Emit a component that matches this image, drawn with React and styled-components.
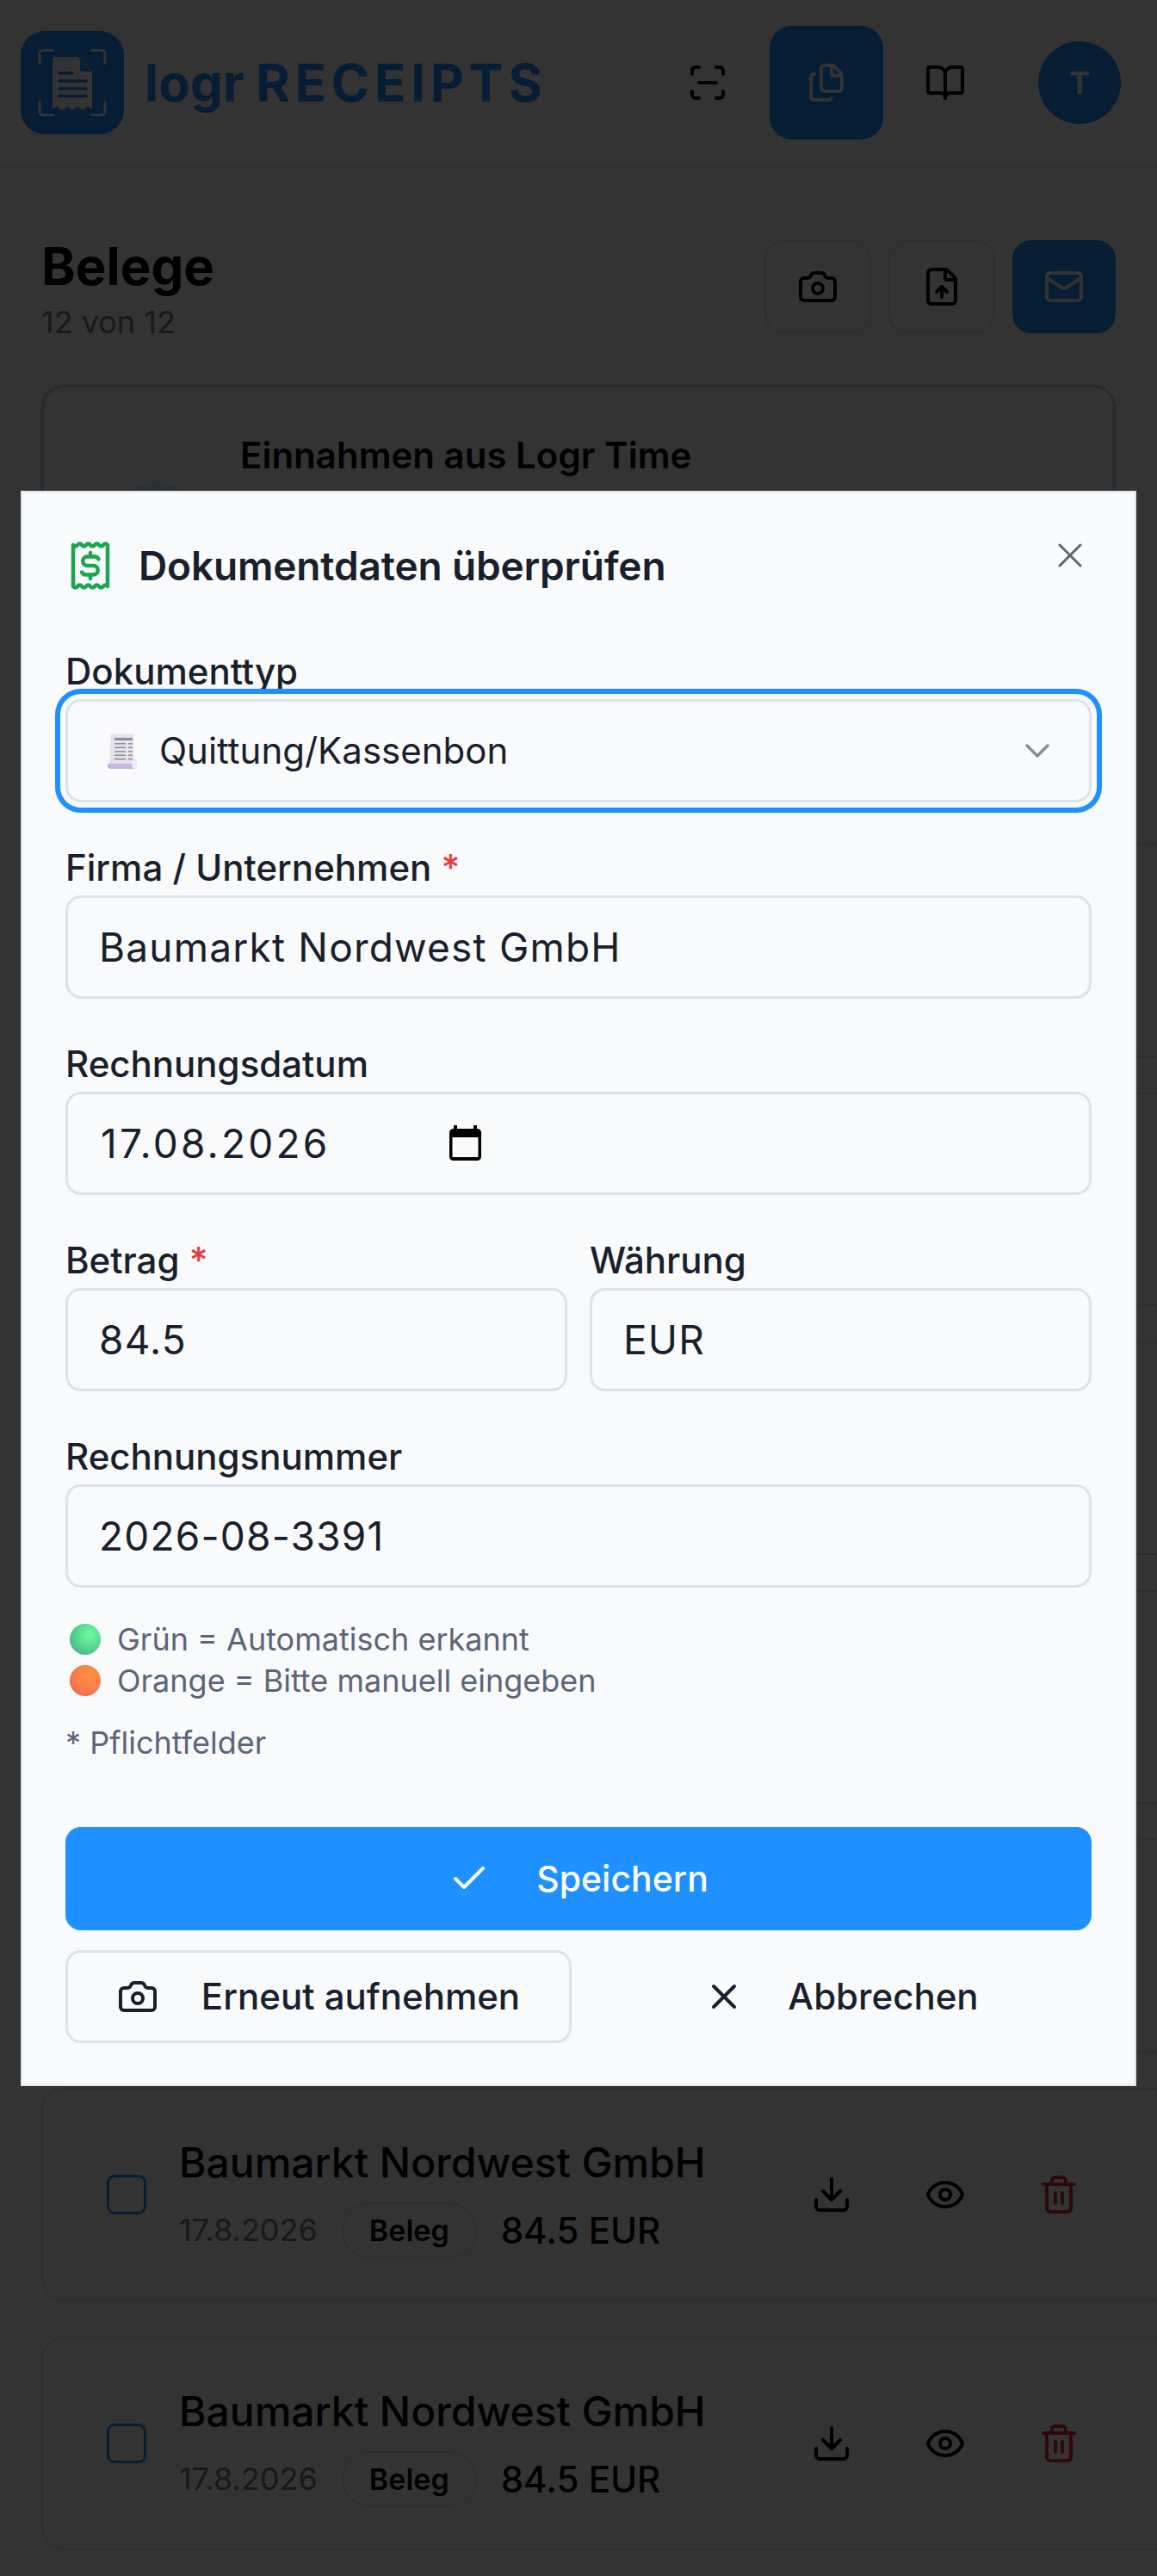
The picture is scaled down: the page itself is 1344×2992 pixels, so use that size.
import styled, { createGlobalStyle } from "styled-components";
import { BookOpen, Camera, Check, ChevronDown, Download, Eye, FileUp, Files, Mail, ScanLine, Trash2, X } from "lucide-react";

const Global = createGlobalStyle`
    html, body { margin: 0; padding: 0; background: #fff; }
    body { font-family: Inter, "Noto Sans", sans-serif; color: #1a1f2c; overflow: hidden; }
    * { box-sizing: border-box; }
`;

const Page = styled.div`
    position: relative;
    width: 1344px;
    height: 2992px;
    overflow: hidden;
    background: #fff;
`;
const Header = styled.header`
    height: 194px;
    padding: 0 42px 0 24px;
    display: flex;
    align-items: center;
    gap: 6px;
    border-bottom: 2px solid #e5e9ee;
    background: #fcfcfc;
`;
const Brand = styled.div`
    display: flex;
    align-items: center;
    gap: 24px;
    margin-right: auto;
    color: #1e90ff;
    font-weight: 700;
    font-size: 60px;
`;
const BrandName = styled.div`
    display: flex;
    gap: 14px;
`;
const BrandSub = styled.span`
    letter-spacing: 5.8px;
    font-weight: 700;
`;
const NavButton = styled.div`
    width: 132px;
    height: 132px;
    border-radius: 26px;
    display: flex;
    align-items: center;
    justify-content: center;
    color: ${(p) => (p.$active ? "#fff" : "#000")};
    background: ${(p) => (p.$active ? "#1e90ff" : "transparent")};
`;
const Avatar = styled.div`
    width: 96px;
    height: 96px;
    margin-left: 36px;
    border-radius: 50%;
    background: #1e90ff;
    color: #fff;
    font-size: 36px;
    font-weight: 700;
    display: flex;
    align-items: center;
    justify-content: center;
`;
const Content = styled.main`
    padding: 84px 48px 0;
`;
const TitleRow = styled.div`
    display: flex;
    justify-content: space-between;
    align-items: flex-start;
    margin-bottom: 61px;
    height: 108px;
`;
const PageTitle = styled.h1`
    margin: -4px 0 0;
    font-size: 60px;
    line-height: 70px;
    font-weight: 700;
    color: #000;
`;
const PageSub = styled.div`
    margin-top: 7px;
    font-size: 36px;
    line-height: 46px;
    color: #767c88;
`;
const ToolBar = styled.div`
    display: flex;
    gap: 20px;
    margin-top: 1px;
`;
const ToolButton = styled.div`
    width: ${(p) => (p.$primary ? "120px" : "124px")};
    height: 108px;
    border-radius: 22px;
    border: ${(p) => (p.$primary ? "none" : "2px solid #e5e7eb")};
    background: ${(p) => (p.$primary ? "#1e90ff" : "transparent")};
    color: ${(p) => (p.$primary ? "#fff" : "#000")};
    display: flex;
    align-items: center;
    justify-content: center;
`;
const IncomeCard = styled.section`
    height: 492px;
    margin-bottom: 41px;
    padding: 55px 0 0 71px;
    display: flex;
    gap: 37px;
    border: 3px solid rgba(30, 144, 255, 0.35);
    border-radius: 26px;
`;
const IncomeBadge = styled.div`
    width: 120px;
    height: 120px;
    margin-top: 56px;
    border-radius: 50%;
    background: #dcebfb;
`;
const IncomeTitle = styled.div`
    font-size: 42px;
    line-height: 48px;
    font-weight: 600;
    color: #000;
`;
const DocCard = styled.article`
    width: 1330px;
    height: 248px;
    margin-bottom: 41px;
    padding: 0 0 0 74px;
    display: flex;
    align-items: center;
    border: 2px solid #e5e7eb;
    border-radius: 26px;
`;
const CheckBox = styled.div`
    width: 46px;
    height: 46px;
    margin-right: 38px;
    border-radius: 9px;
    border: 3px solid #1e90ff;
`;
const DocInfo = styled.div`
    width: 692px;
    padding-top: 8px;
`;
const DocName = styled.div`
    font-size: 48px;
    line-height: 56px;
    font-weight: 500;
    color: #000;
    margin-bottom: 18px;
`;
const DocMeta = styled.div`
    display: flex;
    align-items: center;
    gap: 28px;
`;
const DocDate = styled.span`
    font-size: 36px;
    color: #767c88;
`;
const DocBadge = styled.span`
    height: 65px;
    padding: 0 30px;
    border-radius: 33px;
    border: 2px solid #e5e7eb;
    display: flex;
    align-items: center;
    font-size: 34px;
    font-weight: 600;
    color: #000;
`;
const DocAmount = styled.span`
    font-size: 42px;
    font-weight: 500;
    color: #000;
`;
const DocAction = styled.div`
    width: 132px;
    display: flex;
    justify-content: center;
    color: ${(p) => (p.$danger ? "#e03131" : "#000")};
`;

const Overlay = styled.div`
    position: absolute;
    inset: 0;
    padding: 0 24px;
    display: flex;
    align-items: center;
    background: rgba(0, 0, 0, 0.8);
`;
const Modal = styled.div`
    position: relative;
    width: 1296px;
    height: 1853px;
    padding: 54px 50px 50px;
    background: #f9fafc;
    border: 2px solid #dee4ec;
`;
const ModalHeader = styled.div`
    display: flex;
    align-items: center;
    gap: 33px;
    height: 62px;
    padding-left: 6px;
    margin-bottom: 68px;
`;
const ModalTitle = styled.h2`
    margin: 0;
    font-size: 46px;
    font-weight: 600;
    letter-spacing: -0.15px;
    color: #1a1f2c;
`;
const CloseButton = styled.div`
    position: absolute;
    top: 49px;
    right: 51px;
    color: #5f6570;
    display: flex;
`;
const Field = styled.div`
    flex: 1;
    margin-bottom: 52px;
`;
const Label = styled.div`
    height: 48px;
    margin-bottom: 8px;
    font-size: 42px;
    line-height: 48px;
    font-weight: 500;
    color: #1a1f2c;
`;
const Required = styled.span`
    color: #e53e3e;
`;
const Input = styled.div`
    position: relative;
    height: 120px;
    padding: 0 36px;
    display: flex;
    align-items: center;
    border: 3px solid #dde3ea;
    border-radius: 18px;
    background: #f9fafc;
    font-size: 46px;
    letter-spacing: 1.2px;
    color: #1a1f2c;
`;
const SelectBox = styled(Input)`
    outline: 6px solid #1e90ff;
    outline-offset: 6px;
    padding: 0 46px;
    font-size: 42px;
    letter-spacing: 0;
    gap: 26px;
`;
const SelectChevron = styled.div`
    margin-left: auto;
    margin-right: -10px;
    color: #8a8d93;
    display: flex;
`;
const DateText = styled.span`
    letter-spacing: 3.2px;
    margin-left: 2px;
    margin-right: 139px;
`;
const Pair = styled.div`
    display: flex;
    gap: 26px;
`;
const Legend = styled.div`
    margin-top: -16px;
    font-size: 36px;
    line-height: 48px;
    color: #5c6578;
`;
const LegendRow = styled.div`
    display: flex;
    align-items: center;
    gap: 19px;
    padding-left: 5px;
`;
const Dot = styled.span`
    width: 36px;
    height: 36px;
    border-radius: 50%;
    background: ${(p) =>
        p.$tone === "green"
            ? "radial-gradient(circle at 65% 35%, #6dfca0 0%, #55cf8c 55%, #3f9e93 100%)"
            : "radial-gradient(circle at 65% 35%, #ff923f 0%, #f77c4d 55%, #ee4f60 100%)"};
`;
const Hint = styled.div`
    margin-top: 24px;
    font-size: 36px;
    line-height: 48px;
    color: #5c6578;
`;
const SaveButton = styled.div`
    height: 120px;
    margin-top: 74px;
    margin-bottom: 23px;
    border-radius: 18px;
    background: #1e90ff;
    color: #fff;
    font-size: 41px;
    font-weight: 500;
    display: flex;
    align-items: center;
    justify-content: center;
    gap: 54px;
`;
const ButtonRow = styled.div`
    display: flex;
    gap: 22px;
`;
const SecondaryButton = styled.div`
    flex: 1;
    height: 108px;
    border-radius: 18px;
    border: ${(p) => (p.$plain ? "none" : "3px solid #dde3ea")};
    font-size: 42px;
    font-weight: 500;
    color: #1a1f2c;
    display: flex;
    align-items: center;
    justify-content: center;
    gap: 50px;
`;

function LogoMark() {
    return (
        <svg width="120" height="120" viewBox="0 0 120 120">
            <rect width="120" height="120" rx="28" fill="#1e90ff" />
            <g fill="none" stroke="#fff" strokeWidth="3" strokeLinecap="round">
                <path d="M37 22.5h-11a4 4 0 0 0 -4 4v11" />
                <path d="M83 22.5h11a4 4 0 0 1 4 4v11" />
                <path d="M37 97.500h-11a4 4 0 0 1 -4 -4v-11" />
                <path d="M83 97.500h11a4 4 0 0 0 4 -4v-11" />
            </g>
            <path d="M39 30h27l17 17v44l-5 -3.500l-6 4.500l-6 -4.500l-6 4.500l-6 -4.500l-6 4.500l-6 -4.500l-5 3.500v-59a2 2 0 0 1 2 -2z" fill="#fff" />
            <path d="M69 33.500l13 13.500h-11a2 2 0 0 1 -2 -2z" fill="#1e90ff" />
            <g stroke="#1e90ff" strokeWidth="3.500" strokeLinecap="round">
                <path d="M45 49h15" />
                <path d="M45 58h31" />
                <path d="M45 67h31" />
                <path d="M45 75.500h31" />
            </g>
        </svg>
    );
}

function ReceiptDollar() {
    return (
        <svg width="46" height="56" viewBox="0 0 46 56" fill="none" stroke="#1aa64f" strokeWidth="4.500">
            <path d="M3 4q2.500 3 5 0t5 0t5 0t5 0t5 0t5 0t5 0t5 0v48q-2.500 -3 -5 0t-5 0t-5 0t-5 0t-5 0t-5 0t-5 0t-5 0z" strokeLinejoin="round" />
            <path
                d="M32.500 20.500a5 5 0 0 0 -4.500 -3h-8.500a5.250 5.250 0 0 0 0 10.500h7a5.250 5.250 0 0 1 0 10.500h-9a5 5 0 0 1 -4.500 -3M23 13v4.500M23 38.500v4.500"
                strokeLinecap="round"
            />
        </svg>
    );
}

function ReceiptEmoji() {
    return (
        <svg width="34" height="42" viewBox="0 0 34 42">
            <path d="M4 1l2 1.500l2 -1.500l2 1.500l2 -1.500l2 1.500l2 -1.500l2 1.500l2 -1.500l2 1.500l2 -1.500l2 1.500l2 -1.500l2 1.500v36l-28 0z" fill="#e6e2ec" />
            <path d="M0 36h28v2a4 4 0 0 0 6 0a4 4 0 0 1 -4 4h-26a4 4 0 0 1 -4 -6z" fill="#c9b6dc" />
            <rect x="29" y="30" width="5" height="12" rx="2.500" fill="#efeaf3" />
            <g fill="#8f8d96">
                <rect x="8" y="6" width="21" height="3" />
                <rect x="8" y="12" width="13" height="1.500" />
                <rect x="24" y="12" width="5" height="1.500" />
                <rect x="8" y="16.500" width="13" height="1.500" />
                <rect x="24" y="16.500" width="5" height="1.500" />
                <rect x="8" y="21" width="13" height="1.500" />
                <rect x="24" y="21" width="5" height="1.500" />
                <rect x="8" y="25.500" width="13" height="1.500" />
                <rect x="24" y="25.500" width="5" height="1.500" />
                <rect x="8" y="30" width="13" height="1.500" />
                <rect x="24" y="30" width="5" height="1.500" />
            </g>
        </svg>
    );
}

function CalendarGlyph() {
    return (
        <svg width="37" height="41" viewBox="0 0 37 41">
            <path d="M4.500 4h28a4.500 4.500 0 0 1 4.500 4.500v28a4.500 4.500 0 0 1 -4.500 4.500h-28a4.500 4.500 0 0 1 -4.500 -4.500v-28a4.500 4.500 0 0 1 4.500 -4.500z" fill="#000" />
            <rect x="3.500" y="14" width="30" height="23" fill="#f9fafc" />
            <rect x="5" y="0" width="4" height="6" fill="#000" />
            <rect x="28" y="0" width="4" height="6" fill="#000" />
        </svg>
    );
}

const docs = [0, 1, 2, 3, 4, 5, 6];

export default function App() {
    return (
        <Page>
            <Global />
            <Header>
                <Brand>
                    <LogoMark />
                    <BrandName>
                        logr <BrandSub>RECEIPTS</BrandSub>
                    </BrandName>
                </Brand>
                <NavButton><ScanLine size={48} /></NavButton>
                <NavButton $active><Files size={48} /></NavButton>
                <NavButton><BookOpen size={48} /></NavButton>
                <Avatar>T</Avatar>
            </Header>
            <Content>
                <TitleRow>
                    <div>
                        <PageTitle>Belege</PageTitle>
                        <PageSub>12 von 12</PageSub>
                    </div>
                    <ToolBar>
                        <ToolButton><Camera size={48} /></ToolButton>
                        <ToolButton><FileUp size={48} /></ToolButton>
                        <ToolButton $primary><Mail size={48} /></ToolButton>
                    </ToolBar>
                </TitleRow>
                <IncomeCard>
                    <IncomeBadge />
                    <IncomeTitle>Einnahmen aus Logr Time</IncomeTitle>
                </IncomeCard>
                {docs.map((d) => (
                    <DocCard key={d}>
                        <CheckBox />
                        <DocInfo>
                            <DocName>Baumarkt Nordwest GmbH</DocName>
                            <DocMeta>
                                <DocDate>17.8.2026</DocDate>
                                <DocBadge>Beleg</DocBadge>
                                <DocAmount>84.5 EUR</DocAmount>
                            </DocMeta>
                        </DocInfo>
                        <DocAction><Download size={48} /></DocAction>
                        <DocAction><Eye size={48} /></DocAction>
                        <DocAction $danger><Trash2 size={48} /></DocAction>
                    </DocCard>
                ))}
            </Content>
            <Overlay>
                <Modal>
                    <ModalHeader>
                        <ReceiptDollar />
                        <ModalTitle>Dokumentdaten überprüfen</ModalTitle>
                    </ModalHeader>
                    <CloseButton><X size={48} strokeWidth={1.5} /></CloseButton>
                    <Field>
                        <Label>Dokumenttyp</Label>
                        <SelectBox>
                            <ReceiptEmoji />
                            Quittung/Kassenbon
                            <SelectChevron><ChevronDown size={48} strokeWidth={1.75} /></SelectChevron>
                        </SelectBox>
                    </Field>
                    <Field>
                        <Label>Firma / Unternehmen <Required>*</Required></Label>
                        <Input>Baumarkt Nordwest GmbH</Input>
                    </Field>
                    <Field>
                        <Label>Rechnungsdatum</Label>
                        <Input><DateText>17.08.2026</DateText><CalendarGlyph /></Input>
                    </Field>
                    <Pair>
                        <Field>
                            <Label>Betrag <Required>*</Required></Label>
                            <Input>84.5</Input>
                        </Field>
                        <Field>
                            <Label>Währung</Label>
                            <Input>EUR</Input>
                        </Field>
                    </Pair>
                    <Field>
                        <Label>Rechnungsnummer</Label>
                        <Input>2026-08-3391</Input>
                    </Field>
                    <Legend>
                        <LegendRow><Dot $tone="green" />Grün = Automatisch erkannt</LegendRow>
                        <LegendRow><Dot $tone="orange" />Orange = Bitte manuell eingeben</LegendRow>
                    </Legend>
                    <Hint>* Pflichtfelder</Hint>
                    <SaveButton><Check size={48} strokeWidth={2} />Speichern</SaveButton>
                    <ButtonRow>
                        <SecondaryButton><Camera size={48} />Erneut aufnehmen</SecondaryButton>
                        <SecondaryButton $plain><X size={48} strokeWidth={2} />Abbrechen</SecondaryButton>
                    </ButtonRow>
                </Modal>
            </Overlay>
        </Page>
    );
}
